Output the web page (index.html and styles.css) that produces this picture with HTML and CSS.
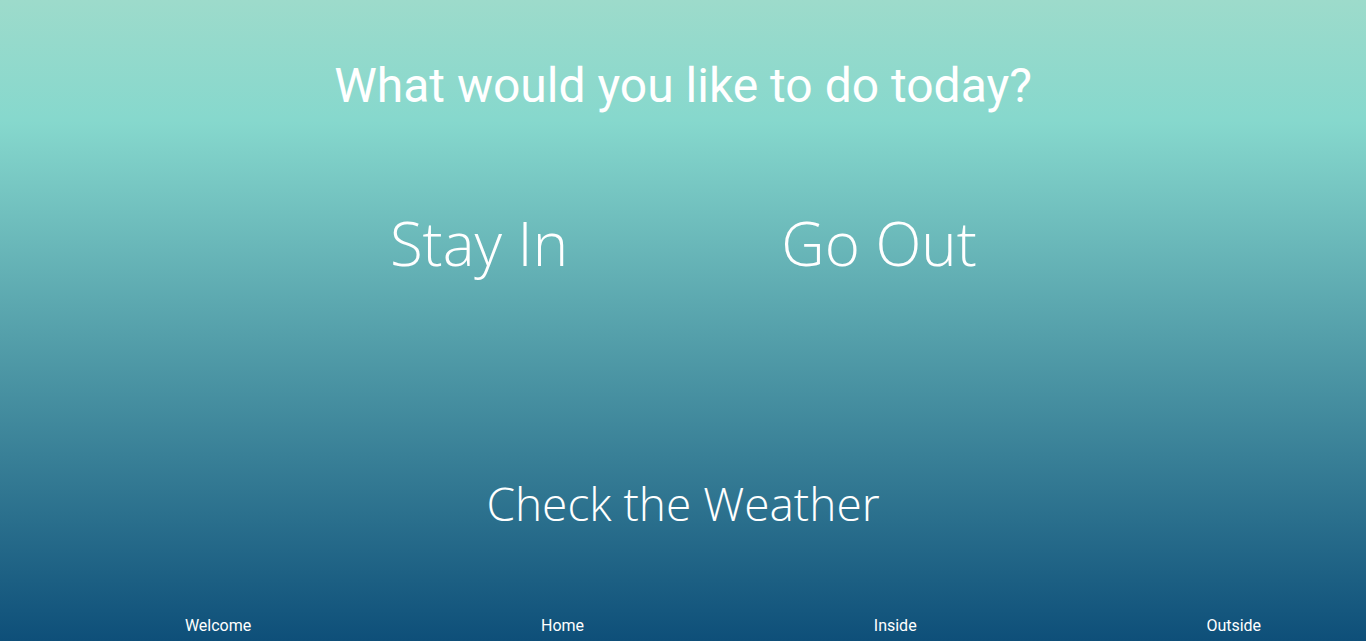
FILE: index.html
```html
<!DOCTYPE html>
<html lang="en">
<head>
<meta charset="utf-8">
<title>What would you like to do today?</title>
<link rel="stylesheet" href="styles.css">
</head>
<body>
<main class="page">
  <h1 class="title">What would you like to do today?</h1>
  <div class="choices">
    <a class="choice" href="#">Stay In</a>
    <a class="choice" href="#">Go Out</a>
  </div>
  <a class="weather" href="#">Check the Weather</a>
  <ul class="nav">
    <li><a href="#">Welcome</a></li>
    <li><a href="#">Home</a></li>
    <li><a href="#">Inside</a></li>
    <li><a href="#">Outside</a></li>
  </ul>
</main>
</body>
</html>
```
FILE: styles.css
```css
html, body {
  margin: 0;
  padding: 0;
  height: 100%;
}
body {
  overflow: hidden;
  background: linear-gradient(to bottom, #9ddbcb 0%, #86d8cd 19%, #0e4f79 100%);
  color: #fff;
}
a {
  color: #fff;
  text-decoration: none;
}
.page {
  height: 641px;
  display: flex;
  flex-direction: column;
  align-items: center;
}
.title {
  margin: 58px 0 0;
  font-family: Roboto, "Liberation Sans", sans-serif;
  font-weight: 400;
  font-size: 48px;
  line-height: 56px;
}
.choices {
  margin: 94px 8px 0 0;
  width: 800px;
  display: flex;
}
.choice {
  flex: 1;
  text-align: center;
  font-family: "Open Sans", sans-serif;
  font-weight: 300;
  font-size: 60px;
  line-height: 70px;
}
.weather {
  margin-top: 196px;
  font-family: "Open Sans", sans-serif;
  font-weight: 300;
  font-size: 46px;
  line-height: 58px;
}
.nav {
  align-self: flex-start;
  margin: auto 0 0;
  padding: 0 0 5px 40px;
  width: 100%;
  list-style: none;
  display: flex;
  justify-content: space-around;
  font-family: Roboto, "Liberation Sans", sans-serif;
  font-size: 16px;
  line-height: 20px;
}
```
